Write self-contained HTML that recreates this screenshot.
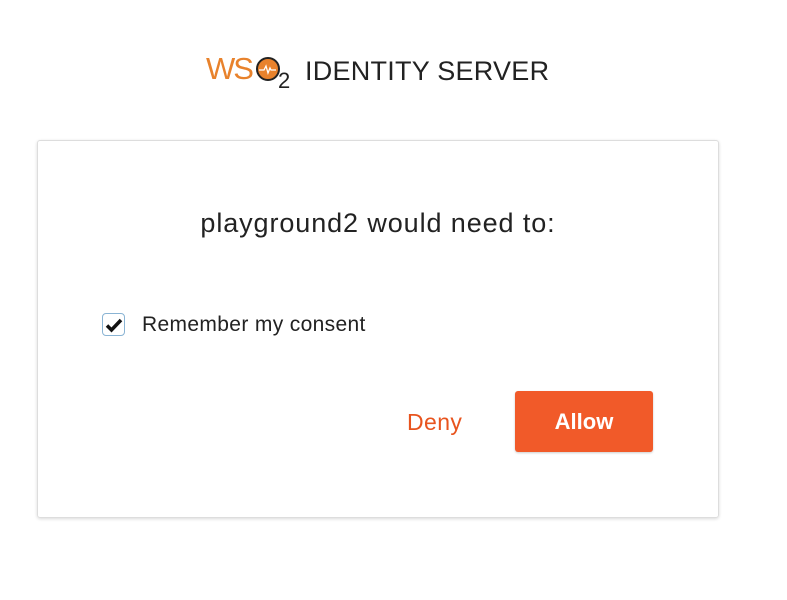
<!DOCTYPE html>
<html><head><style>
body{margin:0;width:787px;height:600px;background:#fff;font-family:"Liberation Sans",sans-serif;position:relative;overflow:hidden}
.a{position:absolute}
</style></head><body>
<div class="a" style="left:206px;top:51px;font-size:31px;color:#e8822c;letter-spacing:-2px;line-height:36px">WS</div>
<svg class="a" style="left:255px;top:56px" width="26" height="26" viewBox="0 0 26 26"><circle cx="13" cy="13" r="11" fill="#e8822c" stroke="#222" stroke-width="2"/><path d="M4 14h5l2-4 2 7 2-5 1 2h5" fill="none" stroke="#fff" stroke-width="1.3"/></svg>
<div class="a" style="left:278px;top:70px;font-size:22px;color:#222;line-height:22px">2</div>
<div class="a" style="left:305px;top:53px;font-size:27px;color:#222;line-height:36px;letter-spacing:0.25px">IDENTITY SERVER</div>
<div class="a" style="left:37px;top:140px;width:680px;height:376px;border:1px solid #ddd;border-radius:3px;box-shadow:0 1px 3px rgba(0,0,0,.15)"></div>
<div class="a" style="left:37px;top:207px;width:682px;text-align:center;font-size:27px;letter-spacing:0.9px;color:#222;line-height:32px">playground2 would need to:</div>
<div class="a" style="left:102px;top:313px;width:21px;height:21px;border:1.5px solid #8ab4d4;border-radius:4px;background:#fff"></div>
<svg class="a" style="left:104px;top:315px" width="20" height="20" viewBox="0 0 20 20"><path d="M3 10.5l4.5 4.5 9.5-10" fill="none" stroke="#111" stroke-width="3.5"/></svg>
<div class="a" style="left:142px;top:313px;font-size:21px;letter-spacing:0.35px;color:#222;line-height:24px">Remember my consent</div>
<div class="a" style="left:407px;top:408px;font-size:23px;letter-spacing:0.4px;color:#e8541e;line-height:28px">Deny</div>
<div class="a" style="left:515px;top:391px;width:138px;height:61px;background:#f15a29;border-radius:3px;color:#fff;font-size:22px;font-weight:bold;text-align:center;line-height:61px;box-shadow:0 1px 2px rgba(0,0,0,.2)">Allow</div>
</body></html>
